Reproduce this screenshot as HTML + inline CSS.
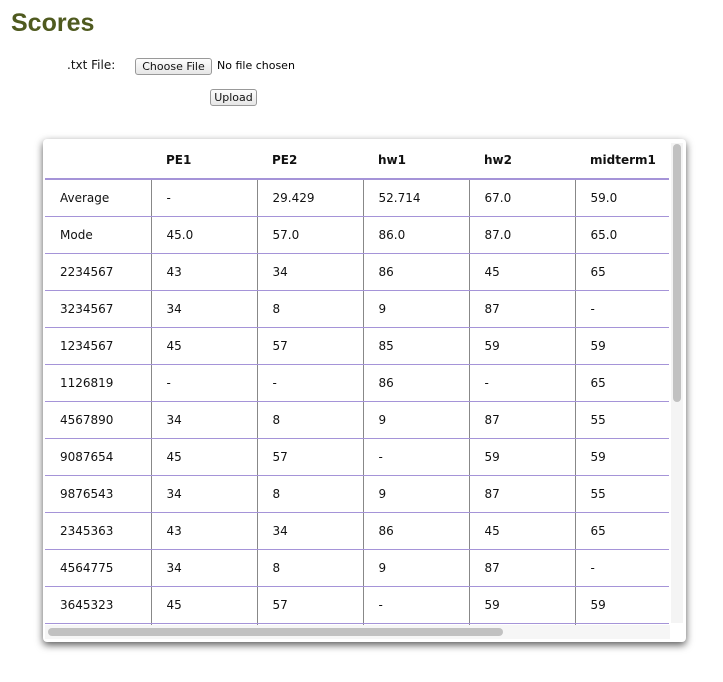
<!DOCTYPE html>
<html><head><style>
body{margin:0;background:#fff;font-family:"DejaVu Sans","Liberation Sans",sans-serif;width:723px;height:682px;overflow:hidden;position:relative}
h1{position:absolute;left:11px;top:9px;margin:0;font-size:25px;font-weight:bold;color:#4f5a1f;font-family:"Liberation Sans",sans-serif}
.lbl{position:absolute;left:67px;top:58px;font-size:12px;color:#111}
.btn{position:absolute;border:1px solid #999;border-radius:3px;background:linear-gradient(#fdfdfd,#e6e6e6);font-size:11px;color:#111;text-align:center;box-sizing:border-box}
.nf{position:absolute;left:217px;top:59px;font-size:11px}
.box{position:absolute;left:43px;top:139px;width:643px;height:503px;background:#fff;border-radius:4px;box-shadow:0 3px 8px rgba(0,0,0,.65)}
.clip{position:absolute;left:2px;top:2px;width:624px;height:484px;overflow:hidden}
table{border-collapse:collapse;table-layout:fixed;width:742px;font-size:12px;color:#111}
td,th{width:106px;padding:0 0 0 15px;box-sizing:border-box;text-align:left;height:37px;border-bottom:1px solid #a594d8;border-left:1px solid #888}
th{height:38px;border-left:none;border-bottom:2px solid #a594d8;font-weight:bold}
td:first-child{border-left:none}
.vs{position:absolute;left:628px;top:4px;width:12px;height:480px;background:#f4f4f4}
.vt{position:absolute;left:630px;top:5px;width:8px;height:258px;background:#c1c1c1;border-radius:4px}
.hs{position:absolute;left:2px;top:486px;width:625px;height:14px;background:#f6f6f6}
.ht{position:absolute;left:5px;top:489px;width:455px;height:8px;background:#c1c1c1;border-radius:4px}
</style></head><body>
<h1>Scores</h1>
<div class="lbl">.txt File:</div>
<div class="btn" style="left:135px;top:58px;width:77px;height:17px;line-height:15px">Choose File</div>
<div class="nf">No file chosen</div>
<div class="btn" style="left:210px;top:89px;width:47px;height:17px;line-height:15px">Upload</div>
<div class="box">
<div class="clip"><table>
<tr><th></th><th>PE1</th><th>PE2</th><th>hw1</th><th>hw2</th><th>midterm1</th><th>x</th></tr>
<tr><td>Average</td><td>-</td><td>29.429</td><td>52.714</td><td>67.0</td><td>59.0</td><td></td></tr>
<tr><td>Mode</td><td>45.0</td><td>57.0</td><td>86.0</td><td>87.0</td><td>65.0</td><td></td></tr>
<tr><td>2234567</td><td>43</td><td>34</td><td>86</td><td>45</td><td>65</td><td></td></tr>
<tr><td>3234567</td><td>34</td><td>8</td><td>9</td><td>87</td><td>-</td><td></td></tr>
<tr><td>1234567</td><td>45</td><td>57</td><td>85</td><td>59</td><td>59</td><td></td></tr>
<tr><td>1126819</td><td>-</td><td>-</td><td>86</td><td>-</td><td>65</td><td></td></tr>
<tr><td>4567890</td><td>34</td><td>8</td><td>9</td><td>87</td><td>55</td><td></td></tr>
<tr><td>9087654</td><td>45</td><td>57</td><td>-</td><td>59</td><td>59</td><td></td></tr>
<tr><td>9876543</td><td>34</td><td>8</td><td>9</td><td>87</td><td>55</td><td></td></tr>
<tr><td>2345363</td><td>43</td><td>34</td><td>86</td><td>45</td><td>65</td><td></td></tr>
<tr><td>4564775</td><td>34</td><td>8</td><td>9</td><td>87</td><td>-</td><td></td></tr>
<tr><td>3645323</td><td>45</td><td>57</td><td>-</td><td>59</td><td>59</td><td></td></tr>
<tr><td>1111111</td><td>1</td><td>1</td><td>1</td><td>1</td><td>1</td><td></td></tr>
</table></div>
<div class="vs"></div><div class="vt"></div>
<div class="hs"></div><div class="ht"></div>
</div>
</body></html>
